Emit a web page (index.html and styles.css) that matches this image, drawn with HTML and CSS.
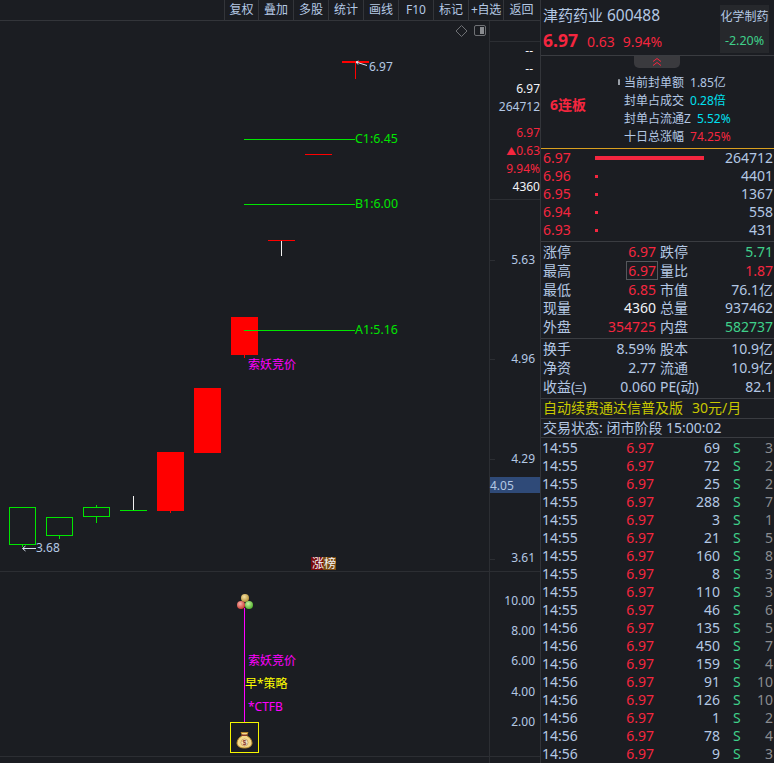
FILE: index.html
```html
<!DOCTYPE html>
<html lang="zh-CN">
<head>
<meta charset="utf-8">
<title>津药药业 600488</title>
<link rel="stylesheet" href="styles.css">
</head>
<body>
<div class="app">
  <main class="left">
    <nav class="toolbar">
      <span class="tool w34">复权</span><span class="tool w35">叠加</span><span class="tool w35">多股</span><span class="tool w35">统计</span><span class="tool w35">画线</span><span class="tool w35">F10</span><span class="tool w35">标记</span><span class="tool w35 tight">+自选</span><span class="tool w36">返回</span>
    </nav>
    <svg class="chart" width="540" height="742" viewBox="0 21 540 742" xmlns="http://www.w3.org/2000/svg">
      <defs>
        <radialGradient id="ballR" cx=".4" cy=".35" r=".7"><stop offset="0" stop-color="#f8b0a8"/><stop offset="1" stop-color="#c8362c"/></radialGradient>
        <radialGradient id="ballG" cx=".4" cy=".35" r=".7"><stop offset="0" stop-color="#c8f0a0"/><stop offset="1" stop-color="#4caf28"/></radialGradient>
        <radialGradient id="ballY" cx=".4" cy=".35" r=".7"><stop offset="0" stop-color="#f4e0a0"/><stop offset="1" stop-color="#b08a30"/></radialGradient>
      </defs>

      <g class="grid">
        <line x1="489.5" y1="21" x2="489.5" y2="763"/>
        <line x1="490" y1="41.5" x2="540" y2="41.5"/>
        <line x1="490" y1="199.5" x2="540" y2="199.5"/>
        <line x1="0" y1="571.5" x2="540" y2="571.5"/>
        <line x1="0" y1="756.5" x2="540" y2="756.5"/>
        <line x1="490" y1="260.5" x2="495" y2="260.5"/>
        <line x1="490" y1="359.5" x2="495" y2="359.5"/>
        <line x1="490" y1="459.5" x2="495" y2="459.5"/>
        <line x1="490" y1="559.5" x2="495" y2="559.5"/>
      </g>

      <path class="icon-line" d="M461.500 25.500l5.500 5.500-5.500 5.500-5.500-5.500z"/>
      <rect class="icon-line" x="474.500" y="25.500" width="11" height="10" rx="1.500"/>
      <rect class="icon-fill" x="480" y="27" width="4" height="7"/>

      <!-- candles -->
      <g class="green-stroke">
        <rect x="9.500" y="507.500" width="26" height="37"/><line x1="22.500" y1="544" x2="22.500" y2="547"/>
        <rect x="46.500" y="517.500" width="26" height="18"/><line x1="59.500" y1="535" x2="59.500" y2="539"/>
        <rect x="83.500" y="507.500" width="26" height="9"/><line x1="96.500" y1="505" x2="96.500" y2="507"/><line x1="96.500" y1="516" x2="96.500" y2="523"/>
        <line x1="120" y1="510.500" x2="147" y2="510.500"/>
      </g>
      <line class="white-stroke" x1="133.500" y1="496" x2="133.500" y2="510"/>
      <rect class="red-fill" x="157" y="452" width="27" height="59"/>
      <rect class="red-fill" x="170" y="511" width="1" height="2"/>
      <rect class="red-fill" x="194" y="388" width="27" height="65"/>
      <rect class="red-fill" x="231" y="317" width="27" height="38"/>
      <rect class="red-fill" x="244" y="355" width="1" height="3"/>
      <line class="white-stroke" x1="281.500" y1="241" x2="281.500" y2="256"/>
      <rect class="red-fill" x="268" y="240" width="27" height="1"/>
      <rect class="red-fill" x="305" y="154" width="27" height="1"/>
      <rect class="red-fill" x="342" y="61" width="27" height="2"/>
      <rect class="red-fill" x="355" y="63" width="1" height="16"/>
      <path class="arrow" d="M367 65.500 L356 62 M358.500 61 L356 62 L358 64.500"/>

      <!-- levels -->
      <g class="green-stroke">
        <line x1="244" y1="139.500" x2="355" y2="139.500"/>
        <line x1="244" y1="204.500" x2="355" y2="204.500"/>
        <line x1="244" y1="330.500" x2="355" y2="330.500"/>
      </g>
      <text class="t level" x="355" y="143">C1:6.45</text>
      <text class="t level" x="355" y="208">B1:6.00</text>
      <text class="t level" x="355" y="334">A1:5.16</text>
      <text class="t blue" x="369" y="71">6.97</text>

      <path class="arrow" d="M36 548.500 H23 M25.500 546 L22.500 548.500 L25.500 551"/>
      <text class="t blue" x="36" y="552">3.68</text>
      <text class="t magenta" x="248" y="369">索妖竞价</text>

      <!-- axis -->
      <g class="axis">
        <text class="t white" x="533" y="55">--</text>
        <text class="t white" x="533" y="73">--</text>
        <text class="t white" x="540" y="93">6.97</text>
        <text class="t blue" x="540" y="111">264712</text>
        <text class="t red" x="540" y="137">6.97</text>
        <text class="t red" x="540" y="155"><tspan class="tri">▲</tspan>0.63</text>
        <text class="t red" x="540" y="173">9.94%</text>
        <text class="t white" x="540" y="191">4360</text>
        <text class="t blue" x="535" y="264">5.63</text>
        <text class="t blue" x="535" y="363">4.96</text>
        <text class="t blue" x="535" y="463">4.29</text>
        <text class="t blue" x="535" y="562">3.61</text>
        <text class="t blue" x="535" y="605">10.00</text>
        <text class="t blue" x="535" y="635">8.00</text>
        <text class="t blue" x="535" y="665">6.00</text>
        <text class="t blue" x="535" y="696">4.00</text>
        <text class="t blue" x="535" y="726">2.00</text>
      </g>
      <rect class="cursor-box" x="490" y="477" width="50" height="16"/>
      <text class="t blue" x="490" y="490">4.05</text>

      <!-- badges -->
      <rect class="badge-red" x="311" y="557" width="12" height="13"/>
      <rect class="badge-brown" x="323" y="557" width="13" height="13"/>
      <text class="t white" x="312" y="568">涨榜</text>

      <!-- lower pane -->
      <line class="magenta-stroke" x1="244.500" y1="608" x2="244.500" y2="722"/>
      <circle cx="245" cy="598" r="4" fill="url(#ballY)"/>
      <circle cx="241" cy="605" r="4" fill="url(#ballR)"/>
      <circle cx="249" cy="605" r="4" fill="url(#ballG)"/>
      <text class="t magenta" x="248" y="665">索妖竞价</text>
      <text class="t yellow" x="245" y="688">早*策略</text>
      <text class="t magenta" x="248" y="711">*CTFB</text>
      <rect class="box-yellow" x="230.500" y="722.500" width="28" height="30"/>
      <path class="bag" d="M241 732.500h7l-1.500 3c3 1.500 5.500 4.500 5.500 7.500 0 3-3 5-7.500 5s-7.500-2-7.500-5c0-3 2.500-6 5.500-7.500z"/>
      <rect class="bag-tie" x="241.500" y="734.500" width="6" height="1.500"/>
      <circle class="bag-coin" cx="244.500" cy="742.500" r="3.500"/>
      <text class="bag-s" x="244.500" y="745">$</text>
    </svg>
  </main>

  <aside class="panel">
    <header class="head">
      <div class="head-main">
        <div class="name">津药药业 <span class="code">600488</span></div>
        <div class="price-row"><b class="price">6.97</b><span class="red">0.63</span><span class="red">9.94%</span></div>
      </div>
      <div class="sector"><span>化学制药</span><span class="green sector-pct">-2.20%</span></div>
    </header>

    <section class="info">
      <div class="tab"><svg width="10" height="8" viewBox="0 0 10 8" xmlns="http://www.w3.org/2000/svg"><path class="chev" d="M1 3.500L5 .5l4 3M1 7.500L5 4.500l4 3"/></svg></div>
      <div class="info-body">
        <div class="board">6连板</div>
        <div class="facts">
          <i class="mark"></i>
          <div class="fact"><span class="fact-l">当前封单额</span><span class="blue">1.85亿</span></div>
          <div class="fact"><span class="fact-l">封单占成交</span><span class="cyan">0.28倍</span></div>
          <div class="fact"><span class="fact-l">封单占流通Z</span><span class="cyan">5.52%</span></div>
          <div class="fact"><span class="fact-l">十日总涨幅</span><span class="red">74.25%</span></div>
        </div>
      </div>
    </section>

    <section class="orders">
      <div class="order"><span class="red">6.97</span><i class="bar bar-long"></i><span class="vol">264712</span></div>
      <div class="order"><span class="red">6.96</span><i class="bar"></i><span class="vol">4401</span></div>
      <div class="order"><span class="red">6.95</span><i class="bar"></i><span class="vol">1367</span></div>
      <div class="order"><span class="red">6.94</span><i class="bar"></i><span class="vol">558</span></div>
      <div class="order"><span class="red">6.93</span><i class="bar"></i><span class="vol">431</span></div>
    </section>

    <section class="stats s5">
      <span class="lbl">涨停</span><span class="val red">6.97</span><span class="lbl2">跌停</span><span class="val green">5.71</span>
      <span class="lbl">最高</span><span class="val"><em class="hl red">6.97</em></span><span class="lbl2">量比</span><span class="val red">1.87</span>
      <span class="lbl">最低</span><span class="val red">6.85</span><span class="lbl2">市值</span><span class="val blue">76.1亿</span>
      <span class="lbl">现量</span><span class="val white">4360</span><span class="lbl2">总量</span><span class="val blue">937462</span>
      <span class="lbl">外盘</span><span class="val red">354725</span><span class="lbl2">内盘</span><span class="val green">582737</span>
    </section>

    <section class="stats s3">
      <span class="lbl">换手</span><span class="val blue">8.59%</span><span class="lbl2">股本</span><span class="val blue">10.9亿</span>
      <span class="lbl">净资</span><span class="val blue">2.77</span><span class="lbl2">流通</span><span class="val blue">10.9亿</span>
      <span class="lbl">收益(<small class="mini">三</small>)</span><span class="val blue">0.060</span><span class="lbl2">PE(动)</span><span class="val blue">82.1</span>
    </section>

    <div class="promo">自动续费通达信普及版<span class="promo-price">30元/月</span></div>
    <div class="status">交易状态: 闭市阶段 15:00:02</div>

    <section class="trades">
      <div class="trade"><span>14:55</span><span class="red">6.97</span><span>69</span><span class="green">S</span><span class="cnt">3</span></div>
      <div class="trade"><span>14:55</span><span class="red">6.97</span><span>72</span><span class="green">S</span><span class="cnt">2</span></div>
      <div class="trade"><span>14:55</span><span class="red">6.97</span><span>25</span><span class="green">S</span><span class="cnt">2</span></div>
      <div class="trade"><span>14:55</span><span class="red">6.97</span><span>288</span><span class="green">S</span><span class="cnt">7</span></div>
      <div class="trade"><span>14:55</span><span class="red">6.97</span><span>3</span><span class="green">S</span><span class="cnt">1</span></div>
      <div class="trade"><span>14:55</span><span class="red">6.97</span><span>21</span><span class="green">S</span><span class="cnt">5</span></div>
      <div class="trade"><span>14:55</span><span class="red">6.97</span><span>160</span><span class="green">S</span><span class="cnt">8</span></div>
      <div class="trade"><span>14:55</span><span class="red">6.97</span><span>8</span><span class="green">S</span><span class="cnt">3</span></div>
      <div class="trade"><span>14:55</span><span class="red">6.97</span><span>110</span><span class="green">S</span><span class="cnt">3</span></div>
      <div class="trade"><span>14:55</span><span class="red">6.97</span><span>46</span><span class="green">S</span><span class="cnt">6</span></div>
      <div class="trade"><span>14:56</span><span class="red">6.97</span><span>135</span><span class="green">S</span><span class="cnt">5</span></div>
      <div class="trade"><span>14:56</span><span class="red">6.97</span><span>450</span><span class="green">S</span><span class="cnt">7</span></div>
      <div class="trade"><span>14:56</span><span class="red">6.97</span><span>159</span><span class="green">S</span><span class="cnt">4</span></div>
      <div class="trade"><span>14:56</span><span class="red">6.97</span><span>91</span><span class="green">S</span><span class="cnt">10</span></div>
      <div class="trade"><span>14:56</span><span class="red">6.97</span><span>126</span><span class="green">S</span><span class="cnt">10</span></div>
      <div class="trade"><span>14:56</span><span class="red">6.97</span><span>1</span><span class="green">S</span><span class="cnt">2</span></div>
      <div class="trade"><span>14:56</span><span class="red">6.97</span><span>78</span><span class="green">S</span><span class="cnt">4</span></div>
      <div class="trade"><span>14:56</span><span class="red">6.97</span><span>9</span><span class="green">S</span><span class="cnt">3</span></div>
    </section>
  </aside>
</div>
</body>
</html>
```

FILE: styles.css
```css
* { box-sizing: border-box; margin: 0; padding: 0; }
html, body { height: 100%; overflow: hidden; background: #1b1d22; }
body {
  font-family: "Noto Sans", "Noto Sans CJK SC", sans-serif;
  font-size: 14px;
  color: #b4c8e4;
}
.app { display: flex; width: 774px; height: 763px; overflow: hidden; }

/* left */
.left { width: 540px; flex: none; display: flex; flex-direction: column; }
.toolbar {
  height: 21px; flex: none;
  display: flex; justify-content: flex-end;
  border-bottom: 1px solid #33353a;
  padding-right: 1px;
}
.tool {
  border-left: 1px solid #33353a;
  font-size: 12px; line-height: 19px; text-align: center; white-space: nowrap;
  overflow: hidden;
}
.w34 { width: 34px; }
.w35 { width: 35px; }
.w36 { width: 36px; }
.tight { letter-spacing: -.3px; }
.chart { display: block; flex: none; }

.grid line { stroke: #2c2e33; stroke-width: 1; }
.icon-line { fill: none; stroke: #6e7074; stroke-width: 1; }
.icon-fill { fill: #8a8c90; }
.green-stroke rect, .green-stroke line { fill: none; stroke: #00e600; stroke-width: 1; }
.white-stroke { stroke: #f2f2f2; stroke-width: 1; }
.red-fill { fill: #ff0000; }
.magenta-stroke { stroke: #ff00ff; stroke-width: 1; }
.arrow { fill: none; stroke: #d8e2f0; stroke-width: 1; }
.t { font-family: "Noto Sans", "Noto Sans CJK SC", sans-serif; font-size: 12px; }
.t.level { fill: #00e600; font-size: 12.400px; }
.t.blue { fill: #b4c8e4; }
.t.white { fill: #f2f4f8; }
.t.red { fill: #f5263f; }
.t.magenta { fill: #ff00ff; }
.t.yellow { fill: #ffff00; }
.tri { font-size: 10px; }
.axis text { text-anchor: end; }
.cursor-box { fill: #2f4a78; }
.badge-red { fill: #7a0a0a; }
.badge-brown { fill: #7a4a10; }
.box-yellow { fill: none; stroke: #f5f500; stroke-width: 1; }
.bag { fill: #f4d98a; stroke: #b98a2a; stroke-width: 1; }
.bag-tie { fill: #8a3a2a; }
.bag-coin { fill: #fbeec0; stroke: #a06a3a; stroke-width: .5; }
.bag-s { font-family: "Liberation Sans", sans-serif; font-size: 7px; font-weight: 700; fill: #8a3a2a; text-anchor: middle; }

/* panel */
.panel { width: 234px; flex: none; border-left: 1px solid #33353a; display: flex; flex-direction: column; }
.red { color: #f5263f; }
.green { color: #3fd08a; }
.cyan { color: #00e0f0; }
.blue { color: #b4c8e4; }
.white { color: #f2f4f8; }

.head { height: 56px; flex: none; display: flex; justify-content: space-between; border-bottom: 1px solid #3a3c41; padding: 5px 5px 0 2px; }
.name { font-size: 15px; line-height: 20px; white-space: nowrap; }
.code { font-size: 15.500px; }
.price-row { display: flex; align-items: baseline; gap: 8px; margin-top: 3px; font-size: 14px; line-height: 24px; }
.price { color: #f5263f; font-size: 17.500px; font-weight: 700; margin-right: 1px; }
.sector {
  width: 49px; height: 48px; background: #26282c;
  display: flex; flex-direction: column; align-items: center; justify-content: space-around;
  font-size: 12px; line-height: 16px; white-space: nowrap;
}
.sector-pct { font-size: 12.500px; }

.info { height: 93px; flex: none; border-bottom: 1px solid #d9a020; display: flex; flex-direction: column; }
.tab { width: 46px; height: 12px; margin: 0 auto; transform: translateX(-1px); background: #3a3a3e; border-radius: 0 0 5px 5px; display: flex; justify-content: center; align-items: center; }
.chev { fill: none; stroke: #f5263f; stroke-width: 1; }
.info-body { display: flex; flex: 1; align-items: flex-start; }
.board { width: 83px; padding: 25px 0 0 9px; color: #f5263f; font-size: 14px; font-weight: 700; line-height: 24px; flex: none; }
.facts { position: relative; padding-top: 6px; }
.fact { display: flex; gap: 6px; height: 18px; font-size: 12px; line-height: 18px; white-space: nowrap; }
.fact-l { color: #b4c8e4; }
.mark { position: absolute; left: -6px; top: 11px; width: 2px; height: 6px; background: #9aa0a8; border-radius: 1px 1px 0 0; }

.orders { height: 93px; flex: none; padding: 0 1px 0 2px; border-bottom: 1px solid #3a3c41; }
.order { display: grid; grid-template-columns: 52px 1fr auto; height: 18px; line-height: 16px; align-items: center; }
.bar { width: 3px; height: 3px; background: #f5263f; display: block; }
.bar-long { width: 109px; height: 4px; }
.vol { text-align: right; }

.stats { display: grid; grid-template-columns: 41px 72px 44px 1fr; padding: 0 1px 0 2px; border-bottom: 1px solid #3a3c41; flex: none; white-space: nowrap; }
.s5 { height: 97px; grid-auto-rows: 18.800px; }
.s3 { height: 60px; grid-auto-rows: 19px; }
.stats span { line-height: 19px; }
.lbl { color: #b4c8e4; }
.lbl2 { color: #b4c8e4; padding-left: 4px; }
.val { text-align: right; }
.hl { font-style: normal; border: 1px solid #55575c; padding: 0 1px; margin-right: -2px; display: inline-block; line-height: 17px; }
.mini { font-size: 9px; margin: 0 -1px; }

.promo { height: 20px; flex: none; padding-left: 2px; color: #c8c800; line-height: 17px; border-bottom: 1px solid #3a3c41; white-space: nowrap; }
.promo-price { margin-left: 9px; }
.status { height: 19px; flex: none; padding-left: 2px; font-size: 14px; line-height: 18px; border-bottom: 1px solid #3a3c41; white-space: nowrap; }

.trades { flex: 1; overflow: hidden; padding: 1px 0 0 1px; }
.trade { display: grid; grid-template-columns: 50px 62px 66px 21px 32px; height: 18px; line-height: 18px; white-space: nowrap; }
.trade span:nth-child(2), .trade span:nth-child(3), .trade .cnt { text-align: right; }
.trade .green { padding-left: 13px; }
.cnt { color: #8a8c90; }
```
